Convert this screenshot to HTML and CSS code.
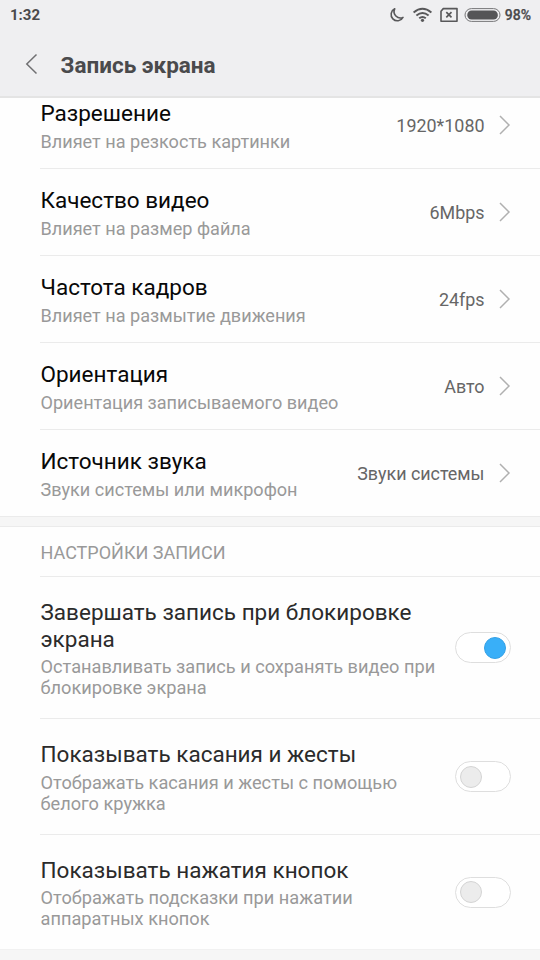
FILE: index.html
```html
<!DOCTYPE html>
<html lang="ru">
<head>
<meta charset="utf-8">
<title>Запись экрана</title>
<link rel="stylesheet" href="styles.css">
</head>
<body>
<div class="screen">
  <header class="header">
    <div class="status">
      <span class="clock">1:32</span>
      <svg class="status-icons" width="112" height="20" viewBox="0 0 112 20" fill="none" stroke="#58585a" stroke-width="1.6">
        <path d="M6.7 3.8A6.3 6.3 0 1 0 15 12.4A6.4 6.4 0 0 1 6.7 3.8Z" stroke-linejoin="round"/>
        <path d="M25.6 7.4Q34.5-.1 43.4 7.4M28.4 10.5Q34.5 5.3 40.6 10.5M31.2 13.3Q34.5 10.5 37.8 13.3" stroke-width="1.9"/>
        <circle cx="34.5" cy="15.3" r="1.6" fill="#58585a" stroke="none"/>
        <path d="M55.3 3.6H69V16.3H53V6.2Z" stroke-linejoin="round"/>
        <path d="M58.3 7.1l5.2 5.2M63.5 7.1l-5.2 5.2" stroke-width="1.7"/>
        <rect x="77" y="3.6" width="35" height="12.8" rx="6.4" stroke-width="1" stroke="#777779"/>
        <rect x="79.3" y="5.5" width="30.5" height="9" rx="4.3" fill="#555557" stroke="none"/>
      </svg>
      <span class="percent">98%</span>
    </div>
    <div class="titlebar">
      <svg class="back" width="14" height="22" viewBox="0 0 14 22" fill="none" stroke="#707072" stroke-width="1.5"><path d="M11.5 1.5L1.8 11L11.5 20.5"/></svg>
      <h1 class="page-title">Запись экрана</h1>
    </div>
  </header>
  <main>
    <section class="options">
      <div class="row">
        <div class="text"><div class="name">Разрешение</div><div class="desc">Влияет на резкость картинки</div></div>
        <span class="value">1920*1080</span>
        <svg class="chevron" viewBox="0 0 12 20"><path d="M1 1L10 10L1 19"/></svg>
      </div>
      <div class="row">
        <div class="text"><div class="name">Качество видео</div><div class="desc">Влияет на размер файла</div></div>
        <span class="value">6Mbps</span>
        <svg class="chevron" viewBox="0 0 12 20"><path d="M1 1L10 10L1 19"/></svg>
      </div>
      <div class="row">
        <div class="text"><div class="name">Частота кадров</div><div class="desc">Влияет на размытие движения</div></div>
        <span class="value">24fps</span>
        <svg class="chevron" viewBox="0 0 12 20"><path d="M1 1L10 10L1 19"/></svg>
      </div>
      <div class="row">
        <div class="text"><div class="name">Ориентация</div><div class="desc">Ориентация записываемого видео</div></div>
        <span class="value">Авто</span>
        <svg class="chevron" viewBox="0 0 12 20"><path d="M1 1L10 10L1 19"/></svg>
      </div>
      <div class="row">
        <div class="text"><div class="name">Источник звука</div><div class="desc">Звуки системы или микрофон</div></div>
        <span class="value">Звуки системы</span>
        <svg class="chevron" viewBox="0 0 12 20"><path d="M1 1L10 10L1 19"/></svg>
      </div>
    </section>
    <div class="band"></div>
    <section class="settings">
      <h2 class="section-title">НАСТРОЙКИ ЗАПИСИ</h2>
      <div class="row setting tall">
        <div class="text"><div class="name">Завершать запись при блокировке<br>экрана</div><div class="desc">Останавливать запись и сохранять видео при<br>блокировке экрана</div></div>
        <span class="toggle on"><span class="knob"></span></span>
      </div>
      <div class="row setting">
        <div class="text"><div class="name">Показывать касания и жесты</div><div class="desc">Отображать касания и жесты с помощью<br>белого кружка</div></div>
        <span class="toggle"><span class="knob"></span></span>
      </div>
      <div class="row setting">
        <div class="text"><div class="name">Показывать нажатия кнопок</div><div class="desc">Отображать подсказки при нажатии<br>аппаратных кнопок</div></div>
        <span class="toggle"><span class="knob"></span></span>
      </div>
    </section>
    <div class="band last"></div>
  </main>
</div>
</body>
</html>
```
FILE: styles.css
```css
* { box-sizing: border-box; }
body { margin: 0; font-family: Roboto, "Noto Sans", sans-serif; background: #fefefe; }
.screen { width: 540px; height: 960px; overflow: hidden; background: #fefefe; }
.header { height: 98px; background: #efeff1; border-bottom: 2px solid #e4e4e4; color: #4a4a4c; }
.status { display: flex; align-items: center; height: 30px; padding: 0 9px 0 10px; font-size: 15px; font-weight: 700; }
.clock { flex: 1; }
.status-icons { flex: none; margin: 0 5px 0 0; overflow: visible; }
.percent { font-size: 14px; font-weight: 500; -webkit-text-stroke: .25px; }
.titlebar { display: flex; align-items: center; height: 68px; padding-left: 25px; }
.back { flex: none; }
.page-title { margin: 1px 0 0 21.5px; font-size: 22.5px; line-height: 28px; font-weight: 700; }
main { overflow: hidden; }
.options { margin-top: -16px; }
.row { display: flex; align-items: center; height: 87px; margin-left: 40px; padding-right: 29px; border-bottom: 1px solid #ebebeb; }
.options .row:last-child { height: 86px; border-bottom: 0; }
.text { flex: 1; white-space: nowrap; padding: 1.5px 0 0 .5px; }
.name { font-size: 22.5px; line-height: 26.5px; color: #080808; }
.desc { margin-top: 4.5px; font-size: 18.1px; line-height: 21px; color: #999; }
.value { font-size: 17.9px; line-height: 22px; color: #666; margin: 2px 14.5px 0 0; }
.chevron { width: 12px; height: 20px; flex: none; fill: none; stroke: #b0b0b0; stroke-width: 1.5; }
.band { height: 11px; background: #f6f6f6; border-top: 1px solid #ebebeb; border-bottom: 1px solid #ebebeb; }
.band.last { border-bottom: 0; border-top-color: #f1f1f1; }
.section-title { margin: 0 0 0 40px; height: 50px; padding: 1px 0 0 .5px; border-bottom: 1px solid #ebebeb; font-size: 18px; line-height: 50px; font-weight: 400; color: #999; }
.setting { height: 116px; }
.setting.tall { height: 142px; }
.setting .text { padding-top: 2px; }
.setting .desc { margin-top: 4px; font-size: 18.2px; }
.settings .row:last-child { height: 114px; border-bottom: 0; }
.setting .name { color: #2b2b2b; }
.toggle { flex: none; display: flex; align-items: center; width: 56px; height: 31px; padding: 0 4px; border: 1px solid #dedede; border-radius: 16px; background: #fff; }
.knob { width: 22px; height: 22px; border-radius: 50%; background: #ececec; border: 1px solid #d4d4d4; }
.toggle.on { justify-content: flex-end; }
.toggle.on .knob { background: #39aff8; border-color: #35a1e6; }
```
